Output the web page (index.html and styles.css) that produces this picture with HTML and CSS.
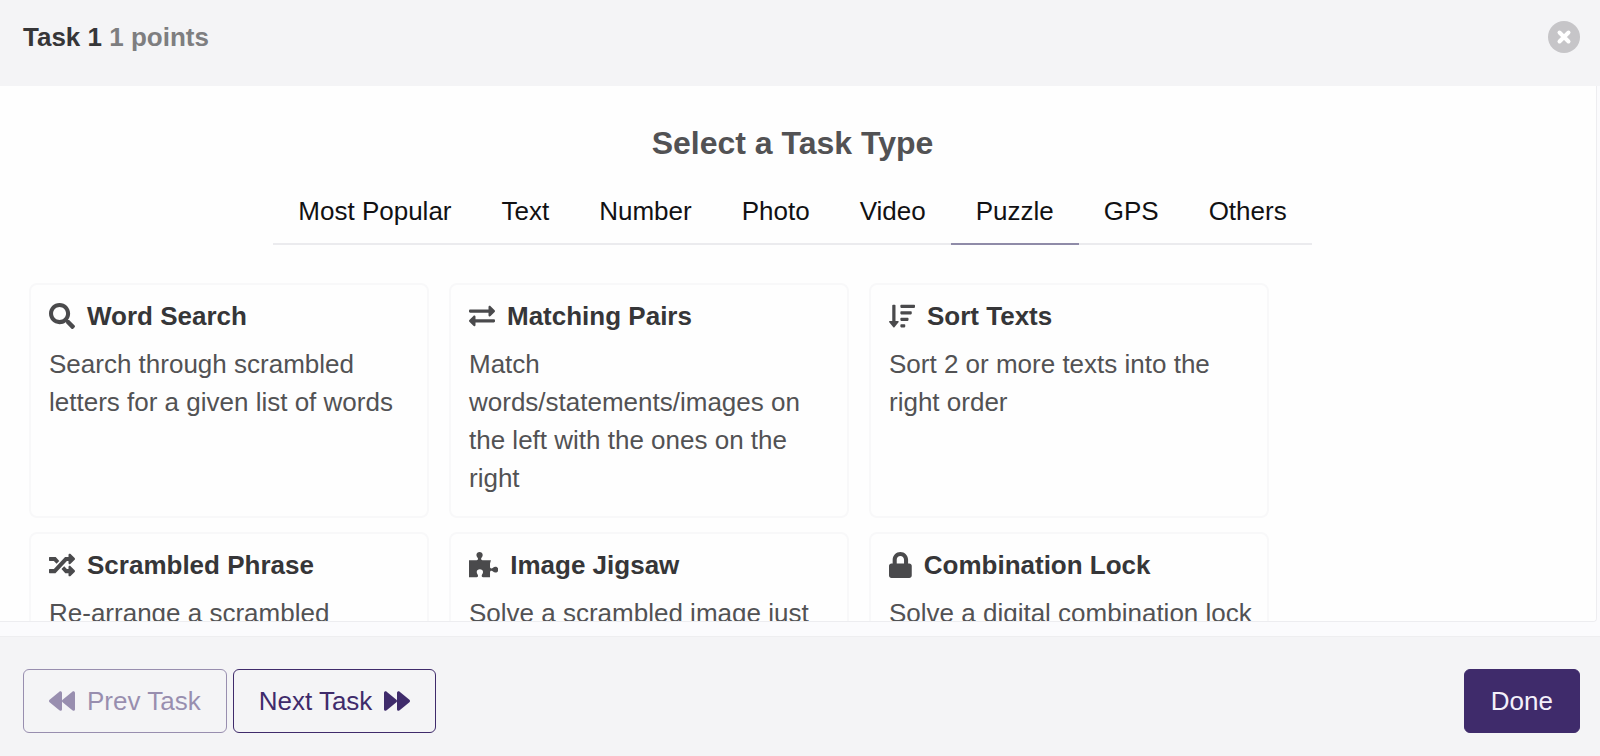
FILE: index.html
```html
<!DOCTYPE html>
<html lang="en">
<head>
  <meta charset="UTF-8" />
  <meta name="viewport" content="width=device-width, initial-scale=1.0"/>
  <title>Select a Task Type</title>
  <link rel="stylesheet" href="styles.css">
</head>
<body>

<header class="header">
  <h1>Task 1 <span>1 points</span></h1>
  <button class="close" type="button" aria-label="Close">
    <svg viewBox="0 0 32 32"><circle cx="16" cy="16" r="16"/><path d="M11.5 11.5l9 9M20.5 11.5l-9 9"/></svg>
  </button>
</header>

<main class="body">
  <div class="panel">
    <h2>Select a Task Type</h2>

    <nav class="tabs">
      <a href="#popular">Most Popular</a>
      <a href="#text">Text</a>
      <a href="#number">Number</a>
      <a href="#photo">Photo</a>
      <a href="#video">Video</a>
      <a href="#puzzle" class="active">Puzzle</a>
      <a href="#gps">GPS</a>
      <a href="#others">Others</a>
    </nav>

    <div class="cards">
      <div class="card">
        <h3>
          <svg class="icon" viewBox="0 0 512 512"><path d="M505 442.7L405.3 343c-4.5-4.5-10.6-7-17-7H372c27.6-35.3 44-79.7 44-128C416 93.1 322.9 0 208 0S0 93.1 0 208s93.1 208 208 208c48.3 0 92.7-16.4 128-44v16.3c0 6.4 2.5 12.5 7 17l99.7 99.7c9.4 9.4 24.6 9.4 33.9 0l28.3-28.3c9.4-9.4 9.4-24.6.1-34zM208 336c-70.7 0-128-57.2-128-128 0-70.7 57.2-128 128-128 70.7 0 128 57.2 128 128 0 70.7-57.2 128-128 128z"/></svg>
          Word Search
        </h3>
        <p>Search through scrambled letters for a given list of words</p>
      </div>

      <div class="card">
        <h3>
          <svg class="icon" viewBox="0 0 512 512"><path d="M0 168v-16c0-13.255 10.745-24 24-24h360V80c0-21.367 25.899-32.042 40.971-16.971l80 80c9.372 9.373 9.372 24.569 0 33.941l-80 80C409.956 271.982 384 261.456 384 240v-48H24c-13.255 0-24-10.745-24-24zm488 152H128v-48c0-21.314-25.862-32.08-40.971-16.971l-80 80c-9.372 9.373-9.372 24.569 0 33.941l80 80C102.057 463.997 128 453.437 128 432v-48h360c13.255 0 24-10.745 24-24v-16c0-13.255-10.745-24-24-24z"/></svg>
          Matching Pairs
        </h3>
        <p>Match words/statements/images on the left with the ones on the right</p>
      </div>

      <div class="card">
        <h3>
          <svg class="icon" viewBox="0 0 512 512"><path d="M304 416h-64a16 16 0 0 0-16 16v32a16 16 0 0 0 16 16h64a16 16 0 0 0 16-16v-32a16 16 0 0 0-16-16zm-128-64h-48V48a16 16 0 0 0-16-16H80a16 16 0 0 0-16 16v304H16c-14.19 0-21.37 17.24-11.29 27.31l80 96a16 16 0 0 0 22.62 0l80-96C197.35 369.26 190.22 352 176 352zm256-192H240a16 16 0 0 0-16 16v32a16 16 0 0 0 16 16h192a16 16 0 0 0 16-16v-32a16 16 0 0 0-16-16zm-64 128H240a16 16 0 0 0-16 16v32a16 16 0 0 0 16 16h128a16 16 0 0 0 16-16v-32a16 16 0 0 0-16-16zM496 32H240a16 16 0 0 0-16 16v32a16 16 0 0 0 16 16h256a16 16 0 0 0 16-16V48a16 16 0 0 0-16-16z"/></svg>
          Sort Texts
        </h3>
        <p>Sort 2 or more texts into the right order</p>
      </div>

      <div class="card">
        <h3>
          <svg class="icon" viewBox="0 0 512 512"><path d="M504.971 359.029c9.373 9.373 9.373 24.569 0 33.941l-80 79.984c-15.01 15.01-40.971 4.49-40.971-16.971V416h-58.785a12.004 12.004 0 0 1-8.773-3.812l-70.556-75.596 53.333-57.143L352 336h32v-39.981c0-21.438 25.943-31.998 40.971-16.971l80 79.981zM12 176h84l52.781 56.551 53.333-57.143-70.556-75.596A11.999 11.999 0 0 0 122.785 96H12c-6.627 0-12 5.373-12 12v56c0 6.627 5.373 12 12 12zm372 0v39.984c0 21.46 25.961 31.98 40.971 16.971l80-79.984c9.373-9.373 9.373-24.569 0-33.941l-80-79.981C409.943 24.021 384 34.582 384 56.019V96h-58.785a12.004 12.004 0 0 0-8.773 3.812L96 336H12c-6.627 0-12 5.373-12 12v56c0 6.627 5.373 12 12 12h110.785c3.326 0 6.503-1.381 8.773-3.812L352 176h32z"/></svg>
          Scrambled Phrase
        </h3>
        <p>Re-arrange a scrambled</p>
      </div>

      <div class="card">
        <h3>
          <svg class="icon" viewBox="0 0 576 512"><path d="M0 164h130c28 0 48-10 48-30 0-22-32-36-32-76C146 22 176 0 208 0s62 22 62 58c0 40-32 54-32 76 0 20 20 30 48 30h146l-18 60v66c0 22 10 34 28 34 22 0 36-36 78-36 34 0 56 24 56 58s-22 58-56 58c-42 0-56-34-78-34-18 0-28 12-28 34v92H276c-20 0-26-12-26-28 0-24 26-38 26-74 0-34-28-54-62-54s-62 20-62 54c0 36 26 50 26 74 0 16-6 28-26 28H0z"/></svg>
          Image Jigsaw
        </h3>
        <p>Solve a scrambled image just</p>
      </div>

      <div class="card">
        <h3>
          <svg class="icon" viewBox="0 0 448 512"><path d="M400 224h-24v-72C376 68.2 307.8 0 224 0S72 68.2 72 152v72H48c-26.500 0-48 21.500-48 48v192c0 26.500 21.500 48 48 48h352c26.500 0 48-21.500 48-48V272c0-26.500-21.500-48-48-48zm-104 0H152v-72c0-39.7 32.3-72 72-72s72 32.3 72 72v72z"/></svg>
          Combination Lock
        </h3>
        <p>Solve a digital combination lock</p>
      </div>
    </div>
  </div>
</main>

<footer class="footer">
  <button class="btn" type="button" disabled>
    <svg class="icon" viewBox="0 0 512 512"><path d="M11.5 280.6l192 160c20.6 17.2 52.5 2.8 52.5-24.6V96c0-27.4-31.9-41.8-52.5-24.6l-192 160c-15.3 12.8-15.3 36.4 0 49.2zm256 0l192 160c20.6 17.2 52.5 2.8 52.5-24.6V96c0-27.4-31.9-41.8-52.5-24.6l-192 160c-15.3 12.8-15.3 36.4 0 49.2z"/></svg>
    Prev Task
  </button>
  <button class="btn" type="button">
    Next Task
    <svg class="icon" viewBox="0 0 512 512"><path d="M500.5 231.4l-192-160C287.9 54.3 256 68.6 256 96v320c0 27.4 31.9 41.8 52.5 24.6l192-160c15.3-12.8 15.3-36.4 0-49.2zm-256 0l-192-160C31.9 54.3 0 68.6 0 96v320c0 27.4 31.9 41.8 52.5 24.6l192-160c15.3-12.8 15.3-36.4 0-49.2z"/></svg>
  </button>
  <button class="btn done" type="button">Done</button>
</footer>

</body>
</html>
```
FILE: styles.css
```css
* {
  box-sizing: border-box;
}
body {
  margin: 0;
  height: 100vh;
  display: flex;
  flex-direction: column;
  font-family: "Liberation Sans", Arial, sans-serif;
  font-size: 26px;
  line-height: 38px;
  color: #525254;
  background: #fbfbfd;
}
h1, h2, h3, p {
  margin: 0;
}
.header {
  display: flex;
  justify-content: space-between;
  align-items: flex-start;
  padding: 18px 20px 30px 23px;
  background: #f4f4f6;
}
h1 {
  font-size: 26px;
  color: #363638;
}
h1 span {
  color: #7e7e80;
}
.close {
  display: flex;
  padding: 3px 0;
  border: none;
  background: none;
  cursor: pointer;
}
.close svg {
  width: 32px;
  height: 32px;
  fill: #c6c5c8;
}
.close path {
  stroke: white;
  stroke-width: 4;
  stroke-linecap: round;
}
.body {
  flex: 1;
  min-height: 0;
  display: flex;
  padding: 0 3px 14px 0;
}
.panel {
  flex: 1;
  overflow-y: auto;
  scrollbar-width: none;
  padding: 38px 11px 0 0;
  background: #fefefe;
  border-right: 1px solid #ededf0;
  border-bottom: 1px solid #ededf0;
  border-bottom-right-radius: 4px;
}
h2 {
  font-size: 32px;
  text-align: center;
}
.tabs {
  display: flex;
  width: fit-content;
  margin: 30px auto 38px;
  border-bottom: 2px solid #ebebee;
}
.tabs a {
  padding: 0 25px 13px;
  margin-bottom: -2px;
  border-bottom: 2px solid transparent;
  color: #111113;
  text-decoration: none;
}
.tabs .active {
  border-color: #8f8ba8;
}
.cards {
  display: grid;
  grid-template-columns: repeat(3, 1fr);
  gap: 14px 20px;
  max-width: 1269px;
  padding-left: 29px;
}
.card {
  padding: 12px 12px 19px 18px;
  border: 2px solid #f8f8f9;
  border-radius: 8px;
}
h3 {
  display: flex;
  align-items: center;
  gap: 12px;
  margin-bottom: 10px;
  font-size: 26px;
  color: #363638;
}
.icon {
  height: 26px;
  fill: #4a4a4c;
}
.footer {
  display: flex;
  gap: 6px;
  padding: 32px 20px 23px 23px;
  background: #f4f4f6;
  border-top: 1px solid #eeeef0;
}
.btn {
  display: flex;
  align-items: center;
  gap: 12px;
  padding: 12px 25px;
  border: 1px solid #3f2b6b;
  border-radius: 6px;
  background: none;
  color: #3f2b6b;
  font: inherit;
  cursor: pointer;
}
.btn .icon {
  fill: #3f2b6b;
}
.btn:disabled {
  opacity: 0.5;
  cursor: default;
}
.done {
  margin-left: auto;
  padding: 12px 26px;
  background: #3f2b6b;
  color: #f4f0fa;
}
```
